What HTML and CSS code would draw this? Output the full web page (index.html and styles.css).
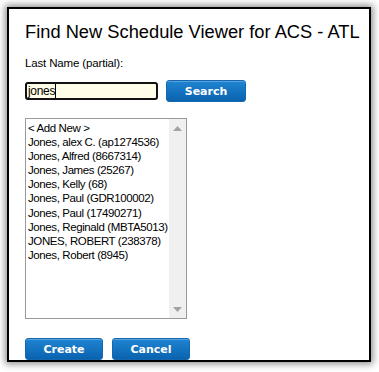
FILE: index.html
```html
<!DOCTYPE html>
<html>
<head>
<meta charset="utf-8">
<link rel="stylesheet" href="styles.css">
</head>
<body>
<div class="dialog">
  <h1 class="title">Find New Schedule Viewer for ACS - ATL</h1>
  <div class="label">Last Name (partial):</div>
  <div class="search-row">
    <div class="input"><span class="val">jones</span><span class="caret"></span></div>
    <button class="btn btn-search">Search</button>
  </div>
  <div class="listbox">
    <ul class="items">
      <li>&lt; Add New &gt;</li>
      <li>Jones, alex C. (ap1274536)</li>
      <li>Jones, Alfred (8667314)</li>
      <li>Jones, James (25267)</li>
      <li>Jones, Kelly (68)</li>
      <li>Jones, Paul (GDR100002)</li>
      <li>Jones, Paul (17490271)</li>
      <li>Jones, Reginald (MBTA5013)</li>
      <li>JONES, ROBERT (238378)</li>
      <li>Jones, Robert (8945)</li>
    </ul>
    <div class="scrollbar">
      <svg class="arrow" width="9" height="5" viewBox="0 0 9 5"><path d="M0 5 L4.5 0 L9 5 Z" fill="#a3a3a3"/></svg>
      <svg class="arrow" width="9" height="5" viewBox="0 0 9 5"><path d="M0 0 L4.5 5 L9 0 Z" fill="#a3a3a3"/></svg>
    </div>
  </div>
  <div class="actions">
    <button class="btn btn-action">Create</button>
    <button class="btn btn-action">Cancel</button>
  </div>
</div>
</body>
</html>
```

FILE: styles.css
```css
html, body {
  margin: 0;
  padding: 0;
  background: #ffffff;
}
body {
  width: 379px;
  height: 372px;
  overflow: hidden;
  padding: 7px 0 0 7px;
  box-sizing: border-box;
}
.dialog {
  width: 364px;
  height: 355px;
  box-sizing: border-box;
  border: 2px solid #000;
  background: #fff;
  box-shadow: 0 0 7px 2px rgba(0,0,0,0.45);
  padding: 12px 0 0 16px;
  white-space: nowrap;
}
.title {
  margin: 0;
  font-family: "Liberation Sans", Arial, sans-serif;
  font-weight: normal;
  font-size: 18.3px;
  line-height: 22px;
  color: #000;
}
.label {
  margin-top: 13px;
  font-family: "Liberation Sans", Tahoma, sans-serif;
  font-size: 11.5px;
  letter-spacing: -0.15px;
  line-height: 14px;
  color: #000;
}
.search-row {
  display: flex;
  align-items: center;
  margin-top: 10px;
  gap: 8px;
}
.input {
  width: 133px;
  height: 18px;
  box-sizing: border-box;
  border: 2px solid #111;
  border-radius: 3px;
  background: #fffde8;
  display: flex;
  align-items: center;
  padding-left: 1px;
  font-family: "Liberation Sans", Tahoma, sans-serif;
  font-size: 12px;
  letter-spacing: -0.3px;
}
.caret {
  width: 1px;
  height: 14px;
  background: #000;
}
.btn {
  border: 1px solid #1467b0;
  border-radius: 3px;
  background: linear-gradient(#1f84d2, #0a63ae);
  color: #fff;
  font-family: "DejaVu Sans", Verdana, sans-serif;
  font-weight: bold;
  font-size: 11px;
  height: 22px;
  padding: 0;
  box-shadow: inset 0 1px 0 rgba(255,255,255,0.25);
}
.btn-search {
  width: 80px;
}
.listbox {
  margin-top: 16px;
  width: 162px;
  height: 201px;
  box-sizing: border-box;
  border: 1px solid #9a9a9a;
  display: flex;
}
.items {
  list-style: none;
  margin: 0;
  padding: 2px 0 0 2px;
  flex: 1;
  min-width: 0;
  overflow: hidden;
  font-family: "Liberation Sans", Tahoma, sans-serif;
  font-size: 11.5px;
  letter-spacing: -0.4px;
  line-height: 14.1px;
  color: #000;
}
.scrollbar {
  width: 17px;
  flex: none;
  background: #f0f0f0;
  display: flex;
  flex-direction: column;
  justify-content: space-between;
  align-items: center;
  padding: 7px 0 6px;
}
.actions {
  display: flex;
  gap: 9px;
  margin-top: 19px;
}
.btn-action {
  width: 78px;
}
```
